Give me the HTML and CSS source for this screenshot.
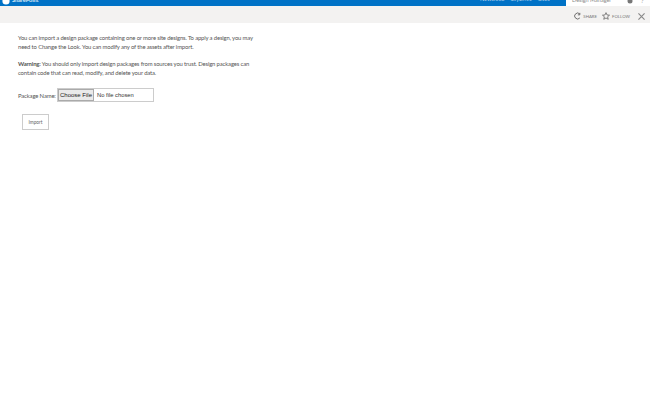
FILE: index.html
```html
<!DOCTYPE html>
<html lang="en">
<head>
<meta charset="utf-8">
<title>Import Design</title>
<link rel="stylesheet" href="styles.css">
</head>
<body>
<header class="suite">
  <div class="brand">
    <svg class="brand-icon" width="8" height="7" viewBox="0 0 8 7"><circle cx="4" cy="2" r="3.6" fill="#fff"/></svg>
    <span class="brand-name">SharePoint</span>
  </div>
  <nav class="suite-links"><span>Newsfeed</span><span>SkyDrive</span><span class="active">Sites</span></nav>
  <div class="user">
    <span class="user-name">Design Manager</span>
    <svg class="user-icon" width="6" height="4" viewBox="0 0 6 4"><circle cx="3" cy="1" r="2.5" fill="#777"/></svg>
    <span class="user-help">?</span>
  </div>
</header>
<div class="ribbon">
  <span class="action">
    <svg width="7" height="8" viewBox="0 0 9 10" fill="none" stroke="#666" stroke-width="1.2"><path d="M7.5 2.5A3.8 3.8 0 1 0 7.5 7.5M7.5 1v2.5H5"/></svg>
    SHARE
  </span>
  <span class="action">
    <svg width="8" height="8" viewBox="0 0 10 10" fill="none" stroke="#666" stroke-width="1"><path d="M5 .8l1.3 2.9 3.1.3-2.4 2 .8 3.1L5 7.5 2.2 9.1 3 6 .6 4l3.1-.3z"/></svg>
    FOLLOW
  </span>
  <svg class="close" width="7" height="7" viewBox="0 0 8 8" stroke="#888" stroke-width="1.3"><path d="M.5.5l7 7M7.5.5l-7 7"/></svg>
</div>
<main class="content">
  <p class="intro">You can import a design package containing one or more site designs. To apply a design, you may need to Change the Look. You can modify any of the assets after import.</p>
  <p class="warning"><b>Warning:</b> You should only import design packages from sources you trust. Design packages can contain code that can read, modify, and delete your data.</p>
  <div class="field">
    <span class="field-label">Package Name:</span>
    <span class="file">
      <span class="file-btn">Choose File</span>
      <span class="file-text">No file chosen</span>
    </span>
  </div>
  <button class="import" type="button">Import</button>
</main>
</body>
</html>
```

FILE: styles.css
```css
* { box-sizing: border-box; }
html, body { margin: 0; height: 100%; background: #fff; overflow: hidden; }
body { font-family: "Lato", "Liberation Sans", sans-serif; color: #555; }

.suite {
  height: 6px;
  background: #0072c6;
  display: flex;
  align-items: flex-end;
  overflow: hidden;
  font-size: 5.5px;
  line-height: 8px;
  color: #b9d6ee;
}
.brand { display: flex; align-items: flex-end; gap: 2px; width: 480px; padding-left: 2px; }
.brand-icon { flex: none; }
.brand-name { margin-bottom: 2px; font-weight: 700; color: #dcebf7; }
.suite-links { display: flex; gap: 6px; width: 86px; margin-bottom: 3px; }
.user {
  flex: 1;
  background: #fff;
  align-self: stretch;
  display: flex;
  align-items: flex-start;
  color: #888;
  padding-left: 6px;
}
.user-name { width: 55px; margin-top: -4px; }
.user-icon { flex: none; }
.user-help { margin-left: 8px; margin-top: -3px; }

.ribbon {
  height: 17px;
  background: #f3f2f1;
  display: flex;
  justify-content: flex-end;
  align-items: center;
  gap: 5px;
  padding: 3px 5px 0 0;
  font-size: 4.3px;
  color: #777;
}
.action { display: flex; align-items: center; gap: 2px; }
.action svg { flex: none; }
.close { margin-left: 3px; }

.content { padding: 10px 0 0 18px; font-size: 5.9px; line-height: 9px; letter-spacing: -0.14px; }
.intro, .warning { margin: 0; width: 238px; }
.warning { margin-top: 8px; }
.warning b { font-weight: 700; }
.field { display: flex; align-items: center; gap: 2px; margin-top: 11px; }
.field-label { white-space: nowrap; width: 37px; }
.file {
  width: 97px;
  height: 14px;
  border: 1px solid #ccc;
  display: flex;
  align-items: center;
  gap: 3px;
  color: #333;
  letter-spacing: 0;
}
.file-btn {
  width: 36px;
  height: 12px;
  background: #eaeaea;
  border: 1px solid #aaa;
  font-family: "Liberation Sans", sans-serif;
  font-size: 6px;
  line-height: 10px;
  text-align: center;
  color: #222;
}
.file-text { font-family: "Liberation Sans", sans-serif; font-size: 5.8px; }
.import {
  display: block;
  margin: 12px 0 0 4px;
  width: 27px;
  height: 16px;
  padding: 0;
  background: #fff;
  border: 1px solid #ccc;
  font-family: inherit;
  font-size: 4.8px;
  color: #666;
}
```
